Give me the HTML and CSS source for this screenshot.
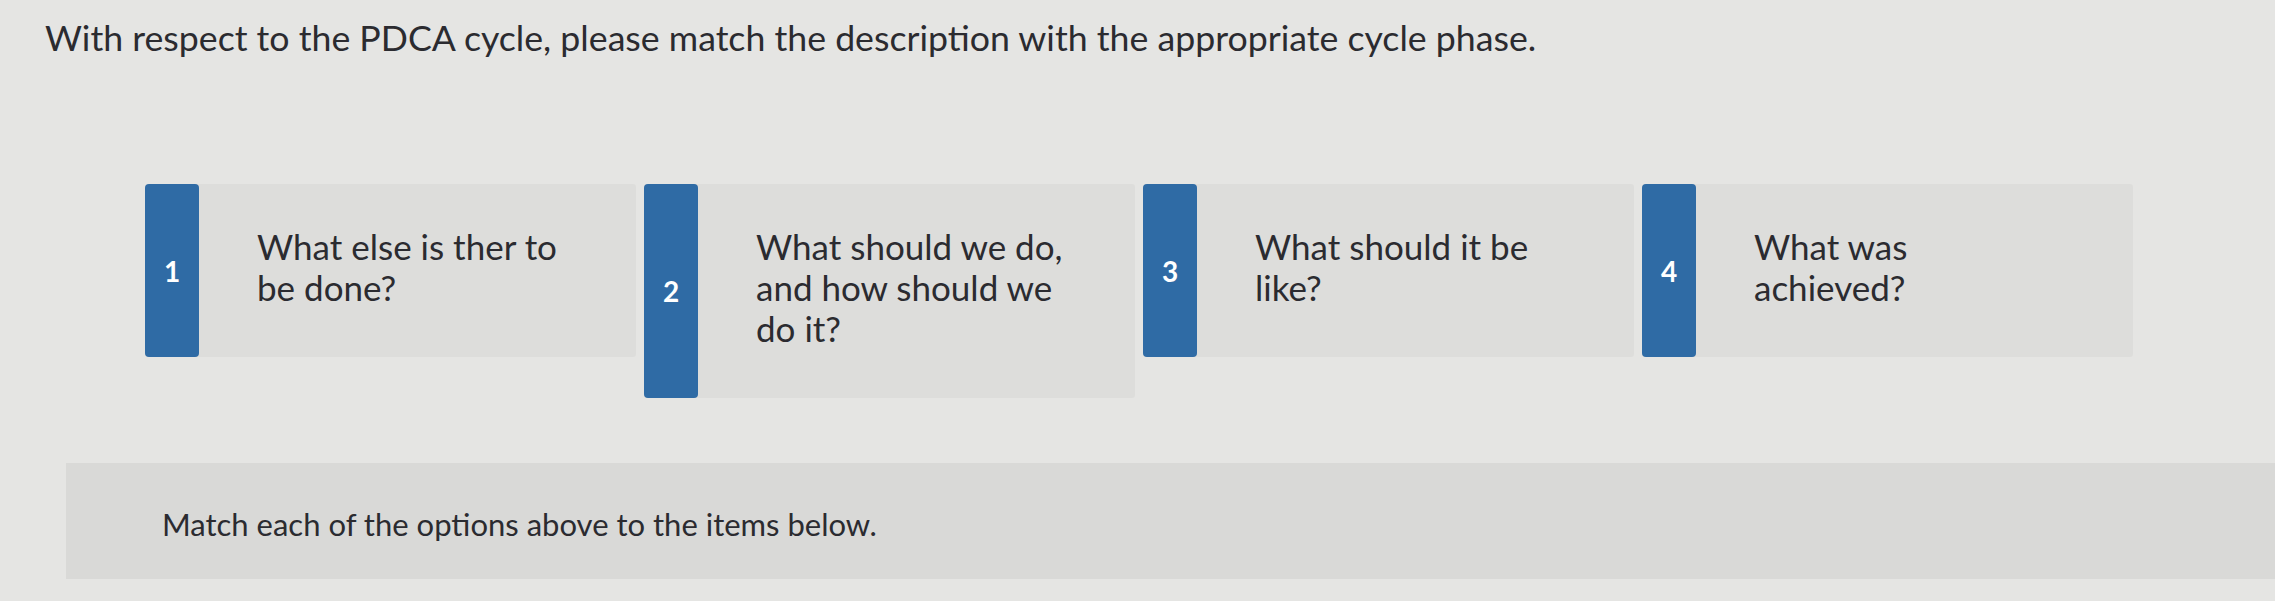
FILE: index.html
```html
<!DOCTYPE html>
<html lang="en">
<head>
<meta charset="utf-8">
<title>PDCA matching</title>
<link rel="stylesheet" href="styles.css">
</head>
<body>
<div class="page">
  <h1 class="prompt">With respect to the PDCA cycle, please match the description with the appropriate cycle phase.</h1>
  <div class="options">
    <div class="card">
      <div class="tab">1</div>
      <div class="desc">What else is ther to be done?</div>
    </div>
    <div class="card">
      <div class="tab">2</div>
      <div class="desc">What should we do, and how should we do it?</div>
    </div>
    <div class="card">
      <div class="tab">3</div>
      <div class="desc">What should it be like?</div>
    </div>
    <div class="card">
      <div class="tab">4</div>
      <div class="desc">What was<br>achieved?</div>
    </div>
  </div>
  <div class="panel">
    <p class="instr">Match each of the options above to the items below.</p>
  </div>
</div>
</body>
</html>
```

FILE: styles.css
```css
* { box-sizing: border-box; }
html, body {
  margin: 0;
  padding: 0;
  background: #e5e5e3;
}
body {
  font-family: Lato, "Open Sans", "Liberation Sans", sans-serif;
  color: #2b2b30;
  width: 2275px;
  height: 601px;
  overflow: hidden;
}
.page {
  padding: 13px 0 0 45px;
}
.prompt {
  margin: 0;
  font-size: 35.7px;
  font-weight: 400;
  line-height: 50px;
}
.options {
  display: flex;
  align-items: flex-start;
  gap: 8px;
  margin: 121px 0 0 100px;
}
.card {
  width: 491px;
  display: flex;
  align-items: stretch;
  background: #dddddb;
  border-radius: 3px;
}
.tab {
  width: 54px;
  flex: 0 0 54px;
  background: #2f6ba5;
  border-radius: 4px;
  color: #fff;
  font-weight: 700;
  font-size: 28px;
  display: flex;
  align-items: center;
  justify-content: center;
}
.desc {
  width: 322px;
  margin-left: 58px;
  padding: 42px 0 49px;
  font-size: 35px;
  line-height: 41px;
}
.panel {
  margin: 65px 0 0 21px;
  height: 116px;
  background: #d9d9d7;
  padding: 41px 0 0 96px;
}
.instr {
  margin: 0;
  font-size: 31px;
  line-height: 40px;
}
```
